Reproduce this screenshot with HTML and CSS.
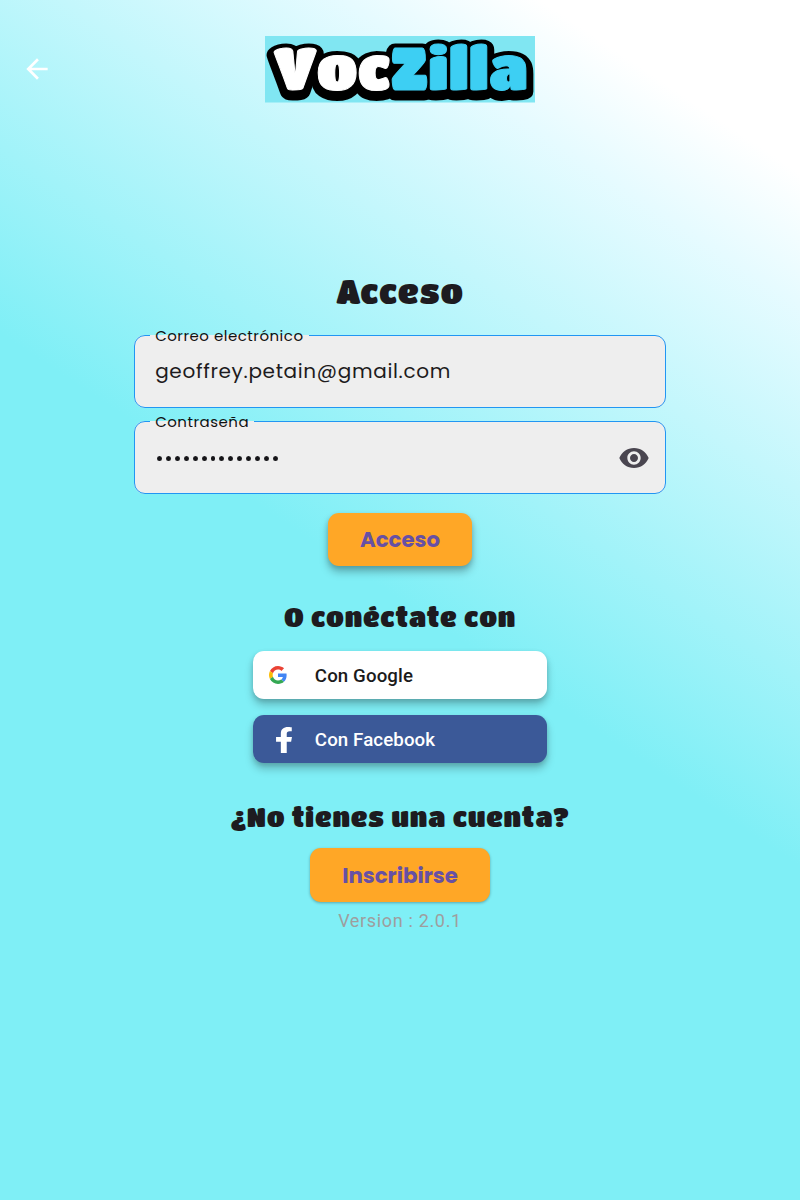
FILE: index.html
```html
<!DOCTYPE html>
<html lang="es">
<head>
<meta charset="utf-8">
<title>VocZilla</title>
<link rel="stylesheet" href="styles.css">
</head>
<body>
<header class="topbar">
  <a class="back" aria-label="Volver"><svg width="32" height="32" viewBox="0 0 24 24" fill="#fff"><path d="M20 11H7.830l5.590-5.590L12 4l-8 8 8 8 1.410-1.410L7.830 13H20z"/></svg></a>
  <svg class="logo" width="270" height="66.500" viewBox="0 0 270 66.500">
    <rect width="270" height="66.500" fill="#80e6f2"/>
    <g class="logo-outline" transform="translate(0 3)" aria-hidden="true">
      <text x="8.500" y="53.500" font-size="59" textLength="117" lengthAdjust="spacingAndGlyphs">Voc</text>
      <text x="126" y="53.500" font-size="59" textLength="137" lengthAdjust="spacingAndGlyphs">Zilla</text>
    </g>
    <g class="logo-face">
      <text class="voc" x="8.500" y="53.500" font-size="59" textLength="117" lengthAdjust="spacingAndGlyphs">Voc</text>
      <text class="zilla" x="126" y="53.500" font-size="59" textLength="137" lengthAdjust="spacingAndGlyphs">Zilla</text>
    </g>
  </svg>
</header>
<main class="login">
  <h1 class="title">Acceso</h1>
  <fieldset class="field">
    <legend class="label">Correo electrónico</legend>
    <span class="value">geoffrey.petain@gmail.com</span>
  </fieldset>
  <fieldset class="field">
    <legend class="label">Contraseña</legend>
    <span class="dots"><i></i><i></i><i></i><i></i><i></i><i></i><i></i><i></i><i></i><i></i><i></i><i></i><i></i><i></i></span>
    <svg class="eye" width="32" height="32" viewBox="0 0 24 24" fill="#49454f"><path d="M12 4.500C7 4.500 2.730 7.610 1 12c1.730 4.390 6 7.500 11 7.500s9.270-3.110 11-7.500c-1.730-4.390-6-7.500-11-7.500zM12 17c-2.760 0-5-2.240-5-5s2.240-5 5-5 5 2.240 5 5-2.240 5-5 5zm0-8c-1.660 0-3 1.340-3 3s1.340 3 3 3 3-1.340 3-3-1.340-3-3-3z"/></svg>
  </fieldset>
  <button class="action action-login">Acceso</button>
  <h2 class="subtitle subtitle-connect">O conéctate con</h2>
  <button class="social google">
    <svg class="g-icon" width="18" height="18" viewBox="0 0 48 48"><path fill="#ea4335" d="M24 9.500c3.540 0 6.710 1.220 9.210 3.600l6.850-6.850C35.900 2.380 30.470 0 24 0 14.620 0 6.510 5.380 2.560 13.220l7.980 6.190C12.430 13.720 17.740 9.500 24 9.500z"/><path fill="#4285f4" d="M46.980 24.550c0-1.570-.15-3.090-.38-4.550H24v9.020h12.940c-.58 2.960-2.260 5.480-4.780 7.180l7.730 6c4.510-4.180 7.090-10.360 7.090-17.650z"/><path fill="#fbbc05" d="M10.530 28.590c-.48-1.450-.76-2.990-.76-4.590s.27-3.140.76-4.590l-7.980-6.190C.92 16.460 0 20.120 0 24c0 3.880.92 7.540 2.560 10.780z"/><path fill="#34a853" d="M24 48c6.480 0 11.930-2.130 15.890-5.810l-7.730-6c-2.150 1.450-4.920 2.300-8.160 2.300-6.260 0-11.570-4.220-13.470-9.910l-7.980 6.190C6.510 42.620 14.620 48 24 48z"/></svg>
    <span>Con Google</span>
  </button>
  <button class="social facebook">
    <svg class="f-icon" width="16" height="26" viewBox="22 0 272 512" preserveAspectRatio="none" fill="#fff"><path d="M279.140 288l14.220-92.660h-88.910v-60.130c0-25.350 12.420-50.060 52.240-50.060h33.310V6.260S257.360 0 225.360 0c-73.220 0-121.080 44.380-121.080 124.720v70.620H22.890V288h81.390v224h100.170V288z"/></svg>
    <span>Con Facebook</span>
  </button>
  <h2 class="subtitle subtitle-account">¿No tienes una cuenta?</h2>
  <button class="action action-signup">Inscribirse</button>
  <p class="version">Version : 2.0.1</p>
</main>
</body>
</html>
```

FILE: styles.css
```css
* { box-sizing: border-box; }
body {
  margin: 0;
  height: 1200px;
  overflow: hidden;
  background: linear-gradient(213.69deg, #fff 10%, #e6fbff 17.500%, #7feff6 50%);
  font-family: Roboto, sans-serif;
}
.topbar {
  display: grid;
  grid-template-columns: 265px 270px;
  align-items: start;
  padding-top: 36px;
  height: 103px;
}
.back { padding: 17px 0 0 21.200px; height: 49px; }
.logo { display: block; overflow: visible; }
.logo text { font-family: "Titan One", Lato, sans-serif; font-weight: 400; }
.logo-outline text { stroke: #000; stroke-width: 15px; stroke-linejoin: round; }
.logo-face text { stroke-width: 1px; stroke-linejoin: round; }
.voc { fill: #fff; stroke: #fff; }
.zilla { fill: #3dcff3; stroke: #3dcff3; }
.login {
  display: flex;
  flex-direction: column;
  align-items: center;
  padding-top: 168px;
}
.title, .subtitle {
  margin: 0;
  font-family: "Titan One", Lato, sans-serif;
  font-weight: 400;
  color: #1d1b20;
  white-space: nowrap;
}
.title { font-size: 33px; line-height: 40px; letter-spacing: .667px; }
.subtitle { font-size: 26.200px; line-height: 34px; letter-spacing: .667px; }
.field {
  display: flex;
  width: 532px;
  height: 83px;
  margin: 14px 0 0;
  padding: 0 15px 0 20.200px;
  border: 1.500px solid #2196f3;
  border-radius: 11px;
  background: #eee;
}
.field + .field { margin-top: 3px; }
.label {
  margin-left: -5px;
  padding: 0 5px;
  height: 20px;
  font: 15px/22px Poppins, Inter, sans-serif;
  letter-spacing: .5px;
  color: #111;
}
.value {
  padding-top: 10px;
  font: 20px/32px Poppins, Inter, sans-serif;
  letter-spacing: .667px;
  color: #1d1b20;
}
.dots { display: flex; gap: 4px; padding: 25px 0 0 2px; }
.dots i { width: 4.900px; height: 5px; border-radius: 50%; background: #151418; }
.eye { margin: 11px 0 0 auto; }
button { border: 0; padding: 0; border-radius: 11px; }
.action {
  background: #ffa726;
  color: #6750a4;
  font: 700 21.300px/53px Poppins, Inter, sans-serif;
}
.action-login { width: 144px; height: 53px; margin-top: 19px; box-shadow: 0 6px 9px rgba(0,0,0,.26), 0 2px 5px rgba(0,0,0,.14); }
.action-signup { width: 180px; height: 54px; box-shadow: 0 1px 3px rgba(0,0,0,.3); }
.subtitle-connect { margin-top: 34px; }
.subtitle-account { margin: 37px 0 14px; }
.social {
  display: grid;
  grid-template-columns: 61.500px 1fr;
  align-items: center;
  width: 293.300px;
  height: 48px;
  text-align: left;
  font: 500 18.700px/48px Roboto, sans-serif;
  letter-spacing: .1px;
  box-shadow: 0 6px 9px rgba(0,0,0,.22), 0 2px 5px rgba(0,0,0,.14);
}
.social span { padding-top: 1px; }
.google { margin-top: 17px; background: #fff; color: #1b1b1b; }
.facebook { margin-top: 16px; background: #3b5998; color: #fff; }
.g-icon { margin: -1px 0 0 15.200px; }
.f-icon { margin: 1px 0 0 22.500px; }
.version { margin: 6px 0 0; font-size: 18px; line-height: 26px; letter-spacing: .667px; color: #9e9e9e; }
```
